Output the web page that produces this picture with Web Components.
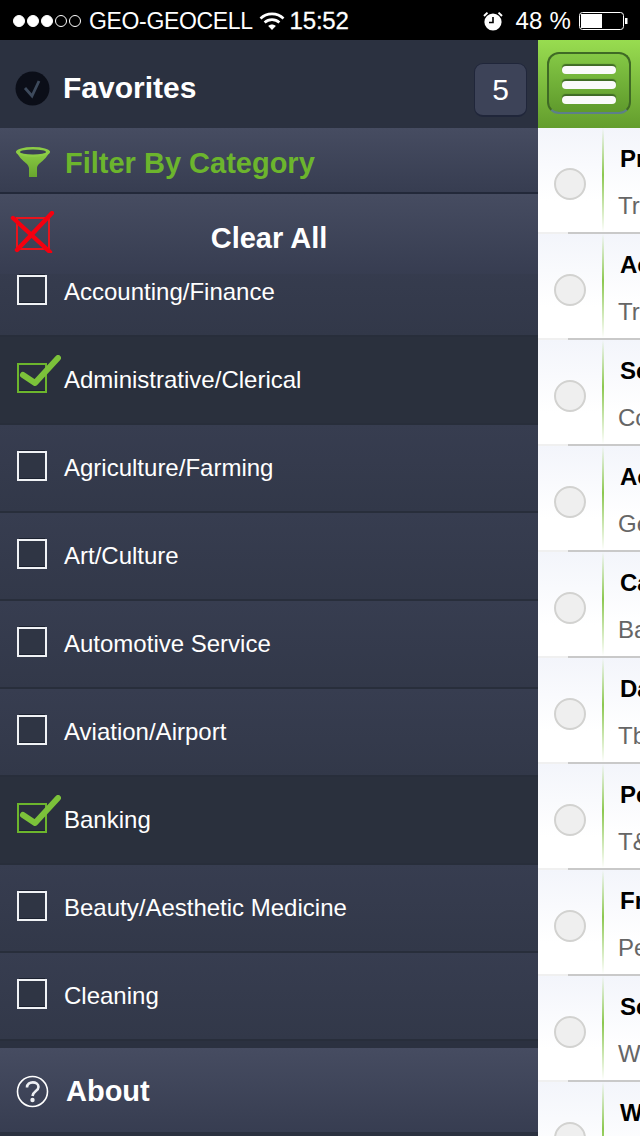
<!DOCTYPE html>
<html>
<head>
<meta charset="utf-8">
<title>Categories</title>
<style>
html, body { margin: 0; padding: 0; width: 640px; height: 1136px; overflow: hidden; background: #000; }
body { font-family: "Liberation Sans", Arial, sans-serif; }
</style>
</head>
<body>
<app-shell>
  <status-bar></status-bar>
  <div slot="drawer">
    <drawer-title count="5"></drawer-title>
    <section-bar kind="filter">Filter By Category</section-bar>
    <section-bar kind="clear">Clear All</section-bar>
    <category-list>
      <category-row>Accounting/Finance</category-row>
      <category-row checked>Administrative/Clerical</category-row>
      <category-row>Agriculture/Farming</category-row>
      <category-row>Art/Culture</category-row>
      <category-row>Automotive Service</category-row>
      <category-row>Aviation/Airport</category-row>
      <category-row checked>Banking</category-row>
      <category-row>Beauty/Aesthetic Medicine</category-row>
      <category-row>Cleaning</category-row>
    </category-list>
    <section-bar kind="about">About</section-bar>
  </div>
  <div slot="main">
    <menu-bar></menu-bar>
    <job-row title="Pr" sub="Tri"></job-row>
    <job-row title="Ac" sub="Tri"></job-row>
    <job-row title="Se" sub="Co"></job-row>
    <job-row title="Ac" sub="Ge"></job-row>
    <job-row title="Ca" sub="Ba"></job-row>
    <job-row title="Da" sub="Tb"></job-row>
    <job-row title="Pe" sub="T&amp;"></job-row>
    <job-row title="Fr" sub="Pe"></job-row>
    <job-row title="Se" sub="W"></job-row>
    <job-row title="W" sub=""></job-row>
  </div>
</app-shell>
<script>
class AppShell extends HTMLElement {
    constructor() {
        super();
        this.attachShadow({ mode: 'open' });
        this.shadowRoot.innerHTML = `
            <style>
                :host { display: block; width: 640px; height: 1136px; overflow: hidden; }
                .body { display: flex; height: 1096px; }
                .drawer { width: 538px; flex: none; overflow: hidden; background: #2b3140; }
                .main { flex: 1; min-width: 0; overflow: hidden; background: #fff; }
            </style>
            <slot></slot>
            <div class="body">
                <div class="drawer"><slot name="drawer"></slot></div>
                <div class="main"><slot name="main"></slot></div>
            </div>
        `;
    }
}

class StatusBar extends HTMLElement {
    constructor() {
        super();
        this.attachShadow({ mode: 'open' });
        this.shadowRoot.innerHTML = `
            <style>
                :host {
                    display: flex;
                    align-items: center;
                    height: 40px;
                    padding: 2px 8px 0 13px;
                    box-sizing: border-box;
                    background: #000;
                    color: #fff;
                    font-size: 23px;
                    letter-spacing: -0.35px;
                    font-family: "Liberation Sans", Arial, sans-serif;
                }
                .dots { display: flex; gap: 2px; margin-right: 8px; }
                .dots i { width: 12px; height: 12px; box-sizing: border-box; border-radius: 50%; border: 1px solid #fff; background: #fff; display: block; }
                .dots i.off { background: none; }
                .carrier { margin-right: 6px; }
                .time { font-size: 24px; margin-left: 5px; letter-spacing: -0.2px; -webkit-text-stroke: 0.3px #fff; }
                .right { margin-left: auto; display: flex; align-items: center; }
                .pct { margin: 0 8px 0 12px; font-size: 24px; letter-spacing: 0.2px; }
                svg { display: block; }
            </style>
            <div class="dots"><i></i><i></i><i></i><i class="off"></i><i class="off"></i></div>
            <span class="carrier">GEO-GEOCELL</span>
            <svg width="26" height="20" viewBox="0 0 26 20">
                <path d="M1.5 7.5C7.8 1.3 18.2 1.3 24.5 7.5" fill="none" stroke="#fff" stroke-width="2.6"/>
                <path d="M5.6 11.5C9.8 7.6 16.2 7.6 20.4 11.5" fill="none" stroke="#fff" stroke-width="2.6"/>
                <path d="M9.2 15C11.4 13 14.6 13 16.8 15L13 19Z" fill="#fff"/>
            </svg>
            <span class="time">15:52</span>
            <div class="right">
                <svg width="20" height="20" viewBox="0 0 20 20">
                    <circle cx="10" cy="11" r="8.6" fill="#fff"/>
                    <path d="M10 6V11.5H6" fill="none" stroke="#000" stroke-width="1.6"/>
                    <path d="M1 5L4.5 1.6M19 5L15.5 1.6" stroke="#fff" stroke-width="2"/>
                </svg>
                <span class="pct">48 %</span>
                <svg width="53" height="20" viewBox="0 0 53 20">
                    <rect x="0.5" y="1.5" width="44" height="17" rx="3" fill="none" stroke="#fff"/>
                    <rect x="2" y="3" width="21" height="14" fill="#fff"/>
                    <path d="M46 7H48.5V13H46Z" fill="#fff"/>
                </svg>
            </div>
        `;
    }
}

class DrawerTitle extends HTMLElement {
    constructor() {
        super();
        this.attachShadow({ mode: 'open' });
        const count = this.getAttribute('count') || '';
        this.shadowRoot.innerHTML = `
            <style>
                :host {
                    display: flex;
                    align-items: center;
                    height: 88px;
                    padding: 8px 11px 0 15px;
                    box-sizing: border-box;
                    background: #2b3140;
                    color: #fff;
                    font-family: "Liberation Sans", Arial, sans-serif;
                }
                svg { display: block; margin-right: 13px; }
                .name { font-size: 30px; font-weight: bold; }
                .badge {
                    margin-left: auto;
                    width: 53px;
                    height: 54px;
                    box-sizing: border-box;
                    border-radius: 9px;
                    background: #3d4358;
                    border: 1px solid #20263a;
                    border-bottom-width: 2px;
                    font-size: 30px;
                    display: flex;
                    align-items: center;
                    justify-content: center;
                    position: relative;
                    top: 2px;
                }
            </style>
            <svg width="35" height="35" viewBox="0 0 35 35">
                <circle cx="17.5" cy="17.5" r="17" fill="#0b0e18"/>
                <path d="M10 17L17 25L24 10" fill="none" stroke="#3d4a5c" stroke-width="2.8"/>
            </svg>
            <span class="name">Favorites</span>
            <span class="badge">${count}</span>
        `;
    }
}

const BAR_ICONS = {
    filter: `<svg class="icon" width="36" height="34" viewBox="0 0 36 34">
        <defs><linearGradient id="fn" x1="0" y1="0" x2="0" y2="1"><stop offset="0" stop-color="#8ccc45"/><stop offset="1" stop-color="#68a62e"/></linearGradient></defs>
        <path d="M1 5C7 17 13 16 14 22V31H22V22C23 16 29 17 35 5Z" fill="url(#fn)"/>
        <ellipse cx="18" cy="6" rx="17" ry="5" fill="#8ccc45"/>
        <ellipse cx="18" cy="6" rx="13" ry="2.4" fill="#3a4055"/>
    </svg>`,
    clear: `<svg class="icon" width="44" height="42" viewBox="0 0 44 42">
        <rect x="7" y="7" width="32" height="31" fill="none" stroke="#e8141c" stroke-width="2"/>
        <path d="M3 7L40 41" stroke="#f5000f" stroke-width="4.4" stroke-linecap="round"/>
        <path d="M7 39L42 2" stroke="#f5000f" stroke-width="4.4" stroke-linecap="round"/>
    </svg>`,
    about: `<svg class="icon" width="33" height="33" viewBox="0 0 33 33">
        <circle cx="16.5" cy="16.5" r="15" fill="none" stroke="#fff" stroke-width="1.6"/>
        <path d="M11 12.5C11 5.5 22.5 6 22.5 12C22.5 16 17 16 16.5 21" fill="none" stroke="#eef0f4" stroke-width="2.6"/>
        <circle cx="16.5" cy="25" r="2.2" fill="#eef0f4"/>
    </svg>`
};

class SectionBar extends HTMLElement {
    constructor() {
        super();
        this.attachShadow({ mode: 'open' });
        const kind = this.getAttribute('kind');
        this.shadowRoot.innerHTML = `
            <style>
                :host {
                    display: flex;
                    align-items: center;
                    box-sizing: border-box;
                    background: linear-gradient(#464c61, #373d51);
                    font-family: "Liberation Sans", Arial, sans-serif;
                    font-weight: bold;
                    font-size: 29px;
                    color: #fff;
                    position: relative;
                }
                :host([kind="filter"]) {
                    height: 66px;
                    padding: 6px 0 0 15px;
                    color: #6cb52d;
                    border-bottom: 2px solid #23293a;
                }
                :host([kind="filter"]) .icon { margin-right: 14px; }
                :host([kind="clear"]) { height: 80px; padding-top: 8px; justify-content: center; }
                :host([kind="clear"]) .icon { position: absolute; left: 10px; top: 17px; }
                :host([kind="about"]) { height: 84px; padding: 2px 0 0 16px; }
                :host([kind="about"]) .icon { margin-right: 17px; }
                .icon { display: block; flex: none; }
            </style>
            ${BAR_ICONS[kind] || ''}
            <span class="label"><slot></slot></span>
        `;
    }
}

class CategoryList extends HTMLElement {
    constructor() {
        super();
        this.attachShadow({ mode: 'open' });
        this.shadowRoot.innerHTML = `
            <style>
                :host {
                    display: block;
                    height: 774px;
                    overflow: hidden;
                    background: #2b3140;
                }
                /* list is scrolled a bit, first row sits under the Clear All bar */
                .scroller { margin-top: -25px; }
            </style>
            <div class="scroller"><slot></slot></div>
        `;
    }
}

class CategoryRow extends HTMLElement {
    constructor() {
        super();
        this.attachShadow({ mode: 'open' });
        const box = this.hasAttribute('checked')
            ? `<svg width="44" height="40" viewBox="0 0 44 40">
                   <rect x="1" y="9" width="28" height="28" fill="#2a303d" stroke="#6cb52d" stroke-width="2"/>
                   <path d="M2 35.5H28" stroke="#1c2230"/>
                   <path d="M6 20L18 28L41 3" fill="none" stroke="#7cc23a" stroke-width="6" stroke-linecap="round" stroke-linejoin="round"/>
               </svg>`
            : `<svg width="44" height="40" viewBox="0 0 44 40">
                   <rect x="1" y="9" width="28" height="28" fill="#2f3544" stroke="#f0f2f5" stroke-width="2"/>
                   <path d="M2 35.5H28M2 7.5H28" stroke="#1c2230"/>
               </svg>`;
        this.shadowRoot.innerHTML = `
            <style>
                :host {
                    display: flex;
                    align-items: center;
                    height: 88px;
                    box-sizing: border-box;
                    padding: 0 0 0 17px;
                    background: linear-gradient(#373d50, #323849);
                    border-bottom: 2px solid #282e3b;
                    color: #fff;
                    font-size: 24px;
                    font-family: "Liberation Sans", Arial, sans-serif;
                }
                :host([checked]) { background: #2a303d; }
                svg { display: block; flex: none; margin: 0 3px 0 0; position: relative; top: -5px; }
            </style>
            ${box}
            <slot></slot>
        `;
    }
}

class MenuBar extends HTMLElement {
    constructor() {
        super();
        this.attachShadow({ mode: 'open' });
        this.shadowRoot.innerHTML = `
            <style>
                :host {
                    display: flex;
                    align-items: center;
                    height: 88px;
                    box-sizing: border-box;
                    padding: 0 9px;
                    background: linear-gradient(#98dc50, #639d2d);
                }
                button {
                    width: 84px;
                    height: 62px;
                    padding: 4px 0 0;
                    box-sizing: border-box;
                    border-radius: 12px;
                    border: 2px solid #3f6a25;
                    border-bottom-color: #5d7f8a;
                    background: linear-gradient(#84c845, #5f9a2c);
                    display: flex;
                    flex-direction: column;
                    align-items: center;
                    justify-content: center;
                    gap: 7px;
                    position: relative;
                    top: -1px;
                }
                i {
                    display: block;
                    width: 54px;
                    height: 8px;
                    border-radius: 4px;
                    background: #fafafa;
                    box-shadow: 0 -2px 1px #3f6a25;
                }
            </style>
            <button aria-label="Menu"><i></i><i></i><i></i></button>
        `;
    }
}

class JobRow extends HTMLElement {
    constructor() {
        super();
        this.attachShadow({ mode: 'open' });
        const title = this.getAttribute('title') || '';
        const sub = this.getAttribute('sub') || '';
        this.shadowRoot.innerHTML = `
            <style>
                :host {
                    display: flex;
                    height: 106px;
                    box-sizing: border-box;
                    background: linear-gradient(#f3f5fb, #ffffff 70%);
                    border-bottom: 2px solid;
                    border-image: linear-gradient(to right, #f0f0f0 30%, #c9c9c9 30%) 1;
                    font-family: "Liberation Sans", Arial, sans-serif;
                    font-size: 24px;
                    white-space: nowrap;
                    overflow: hidden;
                }
                .mark { width: 64px; flex: none; display: flex; align-items: center; justify-content: center; padding-top: 8px; box-sizing: border-box; }
                .mark i {
                    display: block;
                    width: 32px;
                    height: 32px;
                    box-sizing: border-box;
                    border-radius: 50%;
                    border: 2px solid #d2d2d0;
                    background: #efefef;
                }
                .line { width: 2px; flex: none; background: linear-gradient(transparent, #8cc850 45%, transparent); }
                .text { padding: 11px 0 0 14px; }
                .title { font-weight: bold; color: #000; line-height: 40px; margin-left: 2px; }
                .sub { color: #666; line-height: 34px; margin-top: 10px; }
            </style>
            <div class="mark"><i></i></div>
            <div class="line"></div>
            <div class="text">
                <div class="title">${title}</div>
                <div class="sub">${sub}</div>
            </div>
        `;
    }
}

customElements.define('app-shell', AppShell);
customElements.define('status-bar', StatusBar);
customElements.define('drawer-title', DrawerTitle);
customElements.define('section-bar', SectionBar);
customElements.define('category-list', CategoryList);
customElements.define('category-row', CategoryRow);
customElements.define('menu-bar', MenuBar);
customElements.define('job-row', JobRow);
</script>
</body>
</html>
